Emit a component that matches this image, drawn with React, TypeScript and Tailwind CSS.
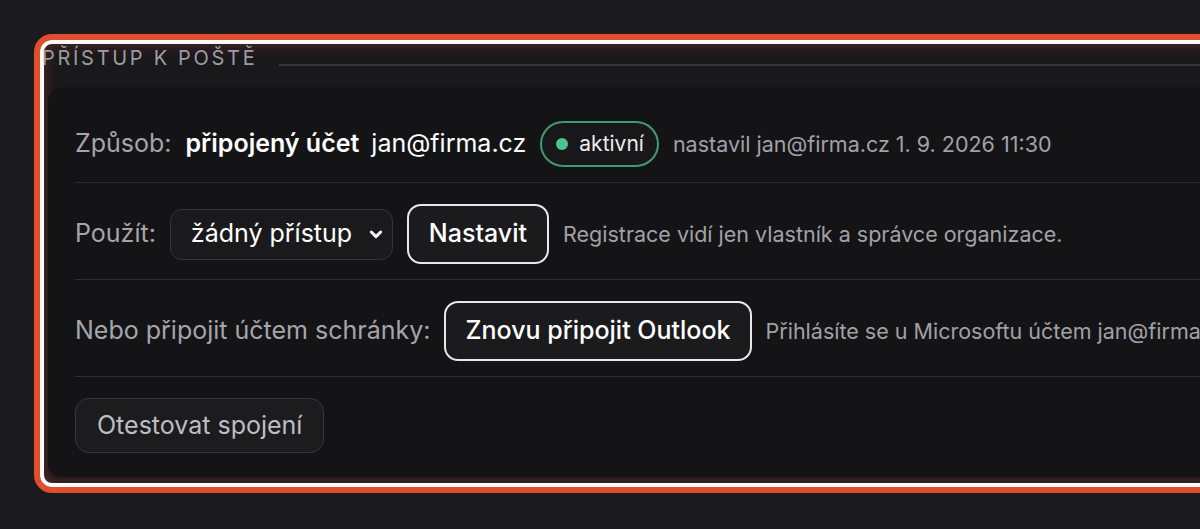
import React from 'react';

function Row({ children, last = false }: { children: React.ReactNode; last?: boolean }) {
    return (
        <div className={`flex items-center gap-[14px] whitespace-nowrap border-[#2c2c31] pt-[21px] ${last ? 'pb-[24px]' : 'pb-[15px] border-b'}`}>
            {children}
        </div>
    );
}

export default function App() {
    return (
        <div className="min-h-screen w-full overflow-hidden bg-[#1b1b1f] pl-[34px] pt-[34px] font-['Inter',sans-serif]">
            {/* zvýraznění sekce */}
            <div className="w-[1300px] rounded-[18px] border-[6px] border-[#e14e2e]">
                <div className="rounded-[12px] border-[4px] border-[#fbfbfb] bg-[#19191c] pb-[6px] shadow-[inset_0_0_14px_rgba(225,78,46,0.35)]">
                    <div className="-ml-[2px] mt-[2px] flex h-[24px] items-end gap-[22px]">
                        <span className="text-[20px] leading-[24px] tracking-[0.135em] text-[#9c9ca2]">PŘÍSTUP K POŠTĚ</span>
                        <div className="mb-[4px] h-[2px] flex-1 bg-[#323237]" />
                    </div>

                    <div className="ml-[4px] mt-[17px] rounded-[14px] bg-[#141417] px-[27px] pt-[13px]">
                        <Row>
                            <span className="text-[25px] text-[#a5a5ac]">Způsob:</span>
                            <span className="text-[25px] font-semibold text-white">připojený účet</span>
                            <span className="-ml-[2px] text-[25px] text-white">jan@firma.cz</span>
                            <span className="flex h-[46px] items-center gap-[11px] rounded-full border-2 border-[#3f9c72] bg-[#18181b] pl-[14px] pr-[13px]">
                                <span className="h-[12px] w-[12px] rounded-full bg-[#4cc38f]" />
                                <span className="text-[21px] text-[#ececef]">aktivní</span>
                            </span>
                            <span className="text-[21.5px] text-[#a1a1a8]">nastavil jan@firma.cz 1. 9. 2026 11:30</span>
                        </Row>

                        <Row>
                            <span className="text-[25px] text-[#a5a5ac]">Použít:</span>
                            <div className="flex h-[51px] w-[223px] items-center justify-between rounded-[12px] border border-[#34343a] bg-[#1a1a1d] pl-[20px] pr-[8px]">
                                <span className="text-[25px] text-white">žádný přístup</span>
                                <svg width="16" height="16" viewBox="0 0 24 24" fill="none" stroke="#f4f4f5" strokeWidth="4.5" strokeLinecap="round" strokeLinejoin="round">
                                    <path d="M5 9l7 7 7-7" />
                                </svg>
                            </div>
                            <button className="h-[60px] rounded-[14px] border-2 border-[#e8e8ea] bg-[#1b1b1e] px-[20px] text-[25px] font-medium text-white">
                                Nastavit
                            </button>
                            <span className="text-[21.5px] text-[#a1a1a8]">Registrace vidí jen vlastník a správce organizace.</span>
                        </Row>

                        <Row>
                            <span className="text-[25px] text-[#a5a5ac]">Nebo připojit účtem schránky:</span>
                            <button className="h-[60px] rounded-[14px] border-2 border-[#e8e8ea] bg-[#1b1b1e] px-[19px] text-[25px] font-medium text-white">
                                Znovu připojit Outlook
                            </button>
                            <span className="text-[21.5px] text-[#a1a1a8]">Přihlásíte se u Microsoftu účtem jan@firma.cz.</span>
                        </Row>

                        <Row last>
                            <button className="h-[55px] rounded-[14px] border border-[#37373d] bg-[#1c1c1f] px-[21px] text-[25px] text-[#bdbdc2]">
                                Otestovat spojení
                            </button>
                        </Row>
                    </div>
                </div>
            </div>
        </div>
    );
}
